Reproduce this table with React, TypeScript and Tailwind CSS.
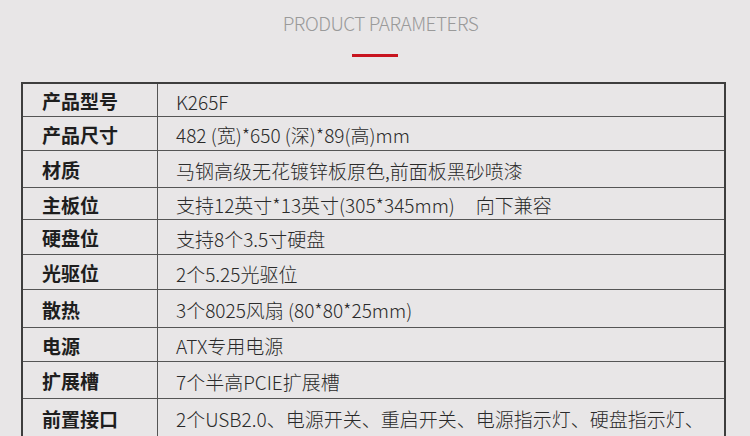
const rows: { label: string; value: string; h: string }[] = [
  { label: "产品型号", value: "K265F", h: "h-[32px]" },
  { label: "产品尺寸", value: "482 (宽)*650 (深)*89(高)mm", h: "h-[34px]" },
  { label: "材质", value: "马钢高级无花镀锌板原色,前面板黑砂喷漆", h: "h-[37px]" },
  { label: "主板位", value: "支持12英寸*13英寸(305*345mm)\u00a0\u00a0\u00a0\u00a0\u00a0向下兼容", h: "h-[32px]" },
  { label: "硬盘位", value: "支持8个3.5寸硬盘", h: "h-[35px]" },
  { label: "光驱位", value: "2个5.25光驱位", h: "h-[35px]" },
  { label: "散热", value: "3个8025风扇 (80*80*25mm)", h: "h-[38px]" },
  { label: "电源", value: "ATX专用电源", h: "h-[34px]" },
  { label: "扩展槽", value: "7个半高PCIE扩展槽", h: "h-[37px]" },
  { label: "前置接口", value: "2个USB2.0、电源开关、重启开关、电源指示灯、硬盘指示灯、", h: "h-[38px]" },
];

export default function App() {
  return (
    <div
      className="w-[750px] h-[436px] overflow-hidden bg-[#e8e6e7]"
      style={{ fontFamily: '"Noto Sans CJK SC", "Noto Sans", sans-serif' }}
    >
      {/* heading */}
      <div className="flex flex-col items-center pt-[9px]">
        <h2 className="ml-[11px] text-[19px] font-light leading-[28px] tracking-[-0.5px] text-[#9a9a9a]">PRODUCT PARAMETERS</h2>
        <div className="mt-[17px] h-[3px] w-[46px] bg-[#c8141f]" />
      </div>

      {/* spec table */}
      <div className="ml-[21px] mt-[25px] w-[705px] border-x-2 border-t-2 border-[#3e3e3e]">
        {rows.map((r, i) => (
          <div
            key={r.label}
            className={`flex ${r.h} ${i > 0 ? "border-t border-[#555]" : ""}`}
          >
            <div className="flex w-[135px] shrink-0 items-center border-r border-[#555] pl-[19px] pt-[3px] text-[19px] font-bold text-[#1e1e1e]">
              {r.label}
            </div>
            <div className="flex items-center pl-[18px] pt-[4px] text-[19px] font-light whitespace-nowrap text-[#2a2a2a]">
              {r.value}
            </div>
          </div>
        ))}
      </div>
    </div>
  );
}
